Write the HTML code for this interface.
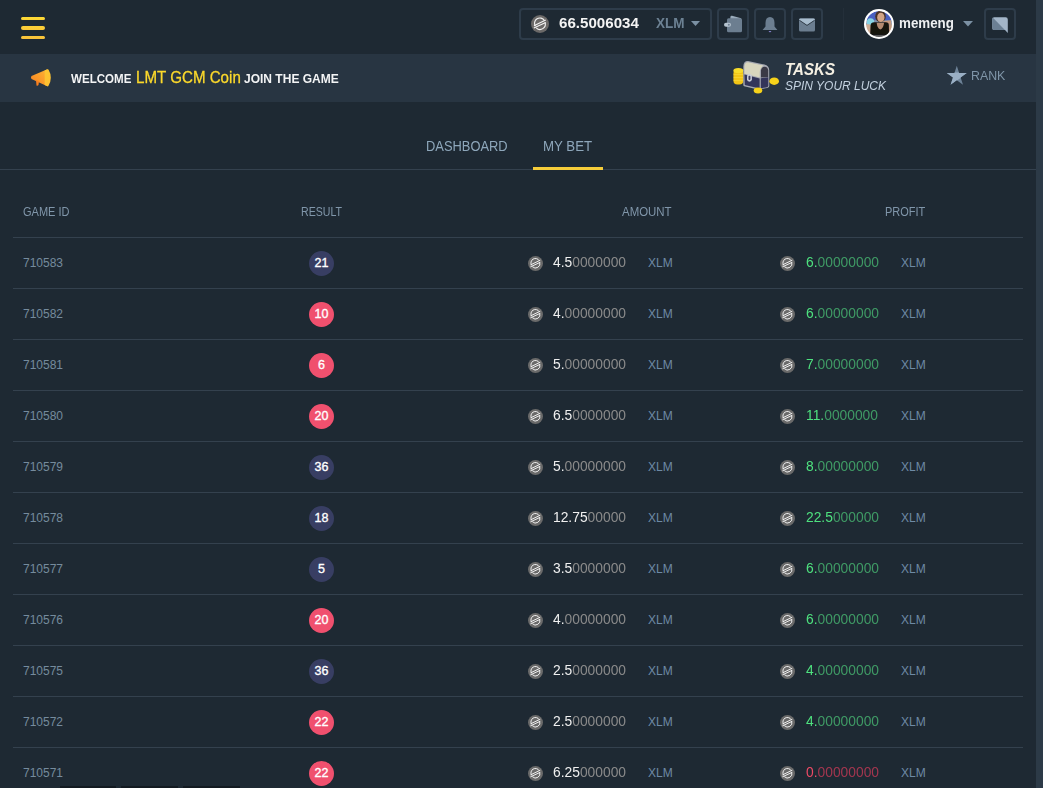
<!DOCTYPE html>
<html><head><meta charset="utf-8">
<style>
*{box-sizing:border-box;margin:0;padding:0}
html,body{width:1043px;height:788px;overflow:hidden;background:#1e2933;font-family:"Liberation Sans",sans-serif}
.abs{position:absolute}
.sx{white-space:nowrap;transform-origin:0 0}
svg{display:block}
#hdr{position:absolute;left:0;top:0;width:1036px;height:54px;background:#1e2933}
#strip{position:absolute;left:1036px;top:0;width:7px;height:788px;background:#2c3a47}
.burger{position:absolute;left:21px;width:24px;height:3.6px;border-radius:2px;background:#fcd23b}
.box{position:absolute;top:8px;height:31.5px;border:2px solid #2e3c4a;border-radius:4px}
#banner{position:absolute;left:0;top:54px;width:1036px;height:48px;background:#283542}
.tabline{position:absolute;left:0;top:169px;width:1036px;height:1px;background:#34414e}
.tab{position:absolute;top:138px;font-size:14px;color:#8ea7bb}
.th{position:absolute;top:205px;font-size:12px;color:#8096aa}
.row{position:absolute;left:13px;width:1010px;height:51px;border-top:1px solid #34414e}
.gid{position:absolute;left:10px;top:18px;font-size:12px;color:#758b9d}
.res{position:absolute;left:296px;top:13px;width:25px;height:25px;border-radius:50%;color:#fff;font-size:12.5px;-webkit-text-stroke:0.35px #fff;text-align:center;line-height:25px}
.res.red{background:#f0506e}
.res.blk{background:#383e63}
.amt,.prf{position:absolute;top:0;height:50px}
.amt{left:514px}
.prf{left:766px}
.xi{position:absolute;left:1px;top:18px;width:15px;height:15px}
.v{position:absolute;left:26px;top:16px;font-size:14px;white-space:nowrap;transform:scaleX(0.987);transform-origin:0 0}
.v b{font-weight:normal;color:#f0f0f0}
.v i{font-style:normal;color:#8a8a8a}
.prf.win .v b{color:#4ee27f}
.prf.win .v i{color:#3f9a65}
.prf.lose .v b{color:#ee4a66}
.prf.lose .v i{color:#a3364f}
.cur{position:absolute;left:121px;top:18px;font-size:12px;color:#6e8aa5}
.prf .v{left:27px}
.prf .cur{left:122px}
</style></head><body>
<div id="hdr">
  <div class="burger" style="top:16.9px;height:3.4px;background:linear-gradient(180deg,#fedb35,#fcd337)"></div>
  <div class="burger" style="top:26.2px;height:3.5px;background:linear-gradient(180deg,#fcd037,#fbc939)"></div>
  <div class="burger" style="top:35.8px;height:3.5px;background:linear-gradient(180deg,#fac73a,#f9c13a)"></div>
  <div class="box" style="left:519px;width:193px"></div>
  <svg class="abs" style="left:531px;top:15px" width="18" height="18" viewBox="0 0 15 15"><circle cx="7.5" cy="7.5" r="7.5" fill="#6b6968"/><g fill="none" stroke="#f4f4f4" stroke-width="0.95"><path d="M3.6 9.3 A4.4 4.4 0 0 1 11.2 4.6"/><path d="M11.7 6.2 A4.4 4.4 0 0 1 4.4 10.7"/><path d="M2.5 8.9 L12.3 4.2"/><path d="M2.4 10.9 L12.2 6.3"/></g></svg>
  <div class="abs sx" id="bal" style="left:559px;top:13.5px;font-size:15.5px;font-weight:bold;color:#f4f4f4;transform:scaleX(0.975)">66.5006034</div>
  <div class="abs sx" id="xlmh" style="left:656px;top:15px;font-size:14px;font-weight:bold;color:#6c8193;transform:scaleX(0.966)">XLM</div>
  <svg class="abs" style="left:691px;top:21px" width="9" height="5" viewBox="0 0 9 5"><path d="M0 0H9L4.5 5Z" fill="#7b90a3"/></svg>
  <div class="box" style="left:717px;width:32px"></div>
  <svg class="abs" style="left:722px;top:13px" width="24" height="22" viewBox="0 0 24 22"><path d="M8.4 4 Q8.6 2.4 10 2.7 L18.2 5 Q19.4 5.4 19.4 6.5 L8.4 6.5Z" fill="#9aabbb"/><rect x="5" y="5.3" width="15" height="14" rx="1.6" fill="#6c7e90"/><rect x="2" y="9.8" width="7" height="4" rx="2" fill="#b5c3cf"/><circle cx="6.8" cy="11.8" r="1" fill="#6c7e90"/></svg>
  <div class="box" style="left:754px;width:32px"></div>
  <svg class="abs" style="left:759px;top:13px" width="22" height="22" viewBox="0 0 22 22"><path d="M11 4 Q15.5 4 15.5 10 L15.5 13.5 L18.4 17 L3.6 17 L6.5 13.5 L6.5 10 Q6.5 4 11 4Z" fill="#6c7e90"/><path d="M9.5 18 H12.5 L11 19.6Z" fill="#8b86d6"/></svg>
  <div class="box" style="left:791px;width:32px"></div>
  <svg class="abs" style="left:796px;top:13px" width="22" height="22" viewBox="0 0 22 22"><rect x="3" y="5.6" width="16" height="13" rx="1.5" fill="#6c7e90"/><path d="M3 7 Q3 5.6 4.5 5.6 L17.5 5.6 Q19 5.6 19 7 L11 12.2Z" fill="#a8bccd"/><path d="M3.3 7.2 L11 12.4 L18.7 7.2" fill="none" stroke="#26313c" stroke-width="0.9"/></svg>
  <div class="abs" style="left:843px;top:8px;width:1px;height:32px;background:#242f3a"></div>
  <div class="abs" style="left:864px;top:9px;width:30px;height:30px;border-radius:50%;background:#fff;padding:1.8px">
    <svg width="26.4" height="26.4" viewBox="0 0 26 26" style="border-radius:50%"><defs><clipPath id="avc"><circle cx="13" cy="13" r="13"/></clipPath><filter id="avb"><feGaussianBlur stdDeviation="0.45"/></filter></defs><g clip-path="url(#avc)"><g filter="url(#avb)">
    <rect x="-2" y="-2" width="30" height="30" fill="#8c9bb5"/>
    <rect x="-2" y="-2" width="30" height="12" fill="#4a5fc0"/>
    <rect x="-2" y="9" width="30" height="2" fill="#7f8fa8"/>
    <ellipse cx="4.5" cy="11" rx="3.6" ry="3.8" fill="#86d4e4"/>
    <ellipse cx="14.3" cy="5.3" rx="5.2" ry="5.8" fill="#4a3327"/>
    <ellipse cx="14.6" cy="6.3" rx="3.6" ry="4.6" fill="#d2a486"/>
    <path d="M17 10 L24.5 9 L25 13 L18 13Z" fill="#c79a7e"/>
    <rect x="-1" y="13" width="6" height="10" rx="2" fill="#cfae96"/>
    <rect x="21" y="13" width="6" height="9" rx="2" fill="#bf9a80"/>
    <path d="M4 26 L4.5 14 Q5 11.2 8 11.2 L19.5 11.2 Q22.5 11.2 22.5 14 L22.8 26Z" fill="#141211"/>
    <path d="M10.5 11.5 L17.8 11.5 Q17.2 17.5 14.1 18.2 Q11 17.5 10.5 11.5Z" fill="#b38a70"/>
    <rect x="6" y="23.6" width="14" height="4" fill="#5a5a5a"/>
    </g></g></svg>
  </div>
  <div class="abs sx" id="memeng" style="left:899px;top:15px;font-size:14px;font-weight:bold;color:#eef0f2;transform:scaleX(0.954)">memeng</div>
  <svg class="abs" style="left:963px;top:21px" width="10" height="6" viewBox="0 0 10 6"><path d="M0 0H10L5 5.5Z" fill="#7b90a3"/></svg>
  <div class="box" style="left:984px;width:32px"></div>
  <svg class="abs" style="left:992px;top:17px" width="16" height="16" viewBox="0 0 16 16"><path d="M2.3 0.3 H13.6 Q15.8 0.3 15.8 2.5 V15.9 L13 13.1 H2.3 Q0.2 13.1 0.2 11 V2.5 Q0.2 0.3 2.3 0.3Z" fill="#a3b5c8"/><path d="M0.2 2.5 Q0.2 0.6 1.2 0.9 L12.9 13.1 H2.3 Q0.2 13.1 0.2 11Z" fill="#6c8094"/></svg>
</div>
<div id="banner">
  <svg class="abs" style="left:30px;top:14px" width="22" height="20" viewBox="0 0 22 20"><defs><linearGradient id="mg" x1="0" y1="1" x2="1" y2="0"><stop offset="0" stop-color="#f7801f"/><stop offset="1" stop-color="#fcb535"/></linearGradient><linearGradient id="mm" x1="0" y1="0" x2="0" y2="1"><stop offset="0" stop-color="#fdc532"/><stop offset="1" stop-color="#fdc030"/></linearGradient></defs><path d="M1.5 8 L17.4 1.3 L17.4 18.3 L1.5 11 Q0.4 9.5 1.5 8Z" fill="url(#mg)"/><path d="M14.7 2.44 L17.4 1.3 Q18 0.8 18.6 1.8 Q20.8 5.5 20.8 9.8 Q20.8 14 18.6 17.6 Q18 18.8 17.4 18.3 L14.7 17.06Z" fill="url(#mm)"/><path d="M6 12 L9 13.3 L8.5 17 Q7.5 18.2 6.5 17.4Z" fill="#f8801f"/></svg>
  <div class="abs sx" id="wel" style="left:71px;top:17px;font-size:13px;font-weight:bold;color:#f3f4f5;transform:scaleX(0.89)">WELCOME</div>
  <div class="abs sx" id="lmt" style="left:136px;top:14px;font-size:17px;color:#fcd92b;-webkit-text-stroke:0.3px #fcd92b;transform:scaleX(0.89)">LMT GCM Coin</div>
  <div class="abs sx" id="join" style="left:243.5px;top:17px;font-size:13px;font-weight:bold;color:#f3f4f5;transform:scaleX(0.924)">JOIN THE GAME</div>
  <svg class="abs" style="left:733px;top:6px" width="47" height="34" viewBox="0 0 47 34">
    <rect x="0.4" y="9.5" width="10" height="15" rx="4" fill="#f2c515"/>
    <ellipse cx="5.4" cy="10.6" rx="5" ry="2.6" fill="#f8dc2a"/>
    <path d="M0.6 14.5 H10.2 M0.6 17.5 H10.2 M0.6 20.5 H10.2" stroke="#fbe04a" stroke-width="0.7" opacity="0.7"/>
    <path d="M10.3 6.5 Q10.6 1 15 1.1 L31.5 4.6 Q36 5.8 36.2 10 L36.3 26 Q36 28 32.6 28.3 L25 29.6 L11.1 26.2 Q10.3 26 10.3 24.5Z" fill="#a6a9b2"/>
    <path d="M11.4 6.5 Q11.8 2.2 15 2.3 L30.6 5.5 Q27 8 26.8 12 L26.8 17.5 L11.4 13.7Z" fill="#d8d6be"/>
    <path d="M11.4 14.6 L26.6 18.4 L26.6 28.4 L11.8 25Z" fill="#33355a"/>
    <path d="M28 10 Q28.5 7 31.6 6.8 Q35 7 35.2 10.5 L35.2 17 L28 17.5Z" fill="#3a3a46"/>
    <path d="M27.8 18.3 L35.3 17.2 L35.3 26 Q35 27.2 33 27.5 L27.8 28.3Z" fill="#33355a"/>
    <rect x="14" y="14" width="4.9" height="7.8" rx="2.45" fill="#c9cdd8"/>
    <rect x="15.5" y="15.8" width="1.9" height="4.2" rx="0.95" fill="#3a3d62"/>
    <ellipse cx="41.2" cy="21.2" rx="4.8" ry="3.7" fill="#f6d21a"/>
    <ellipse cx="25" cy="30.6" rx="4.3" ry="3" fill="#f6d21a"/>
  </svg>
  <div class="abs sx" id="tasks" style="left:785px;top:7px;font-size:16px;font-weight:bold;font-style:italic;color:#f4efe2;transform:scaleX(0.942)">TASKS</div>
  <div class="abs sx" id="spin" style="left:785px;top:24px;font-size:13px;font-style:italic;color:#c3d1df;transform:scaleX(0.922)">SPIN YOUR LUCK</div>
  <svg class="abs" style="left:946px;top:11px" width="22" height="21" viewBox="0 0 22 21"><defs><clipPath id="stc"><path d="M10.8 0.7 L13.17 8 L20.84 8 L14.63 12.5 L17 19.8 L10.8 15.3 L4.6 19.8 L6.97 12.5 L0.76 8 L8.43 8Z"/></clipPath></defs><path d="M10.8 0.7 L13.17 8 L20.84 8 L14.63 12.5 L17 19.8 L10.8 15.3 L4.6 19.8 L6.97 12.5 L0.76 8 L8.43 8Z" fill="#6e8398"/><path d="M0 7.5 L22 7.5 L4.2 20.5Z" fill="#9aafc4" clip-path="url(#stc)"/></svg>
  <div class="abs sx" id="rank" style="left:971px;top:14px;font-size:13px;color:#7f95a8;transform:scaleX(0.951)">RANK</div>
</div>
<div class="tab sx" id="dash" style="left:426px;transform:scaleX(0.921)">DASHBOARD</div>
<div class="tab sx" id="mybet" style="left:543px;transform:scaleX(0.947)">MY BET</div>
<div class="tabline"></div>
<div class="abs" style="left:533px;top:167px;width:70px;height:3px;background:#f6cd3a"></div>
<div class="th sx" id="thg" style="left:22.5px;transform:scaleX(0.918)">GAME ID</div>
<div class="th sx" id="thr" style="left:300.5px;transform:scaleX(0.883)">RESULT</div>
<div class="th sx" id="tha" style="left:622px;transform:scaleX(0.954)">AMOUNT</div>
<div class="th sx" id="thp" style="left:884.5px;transform:scaleX(0.916)">PROFIT</div>
<div class="row" style="top:237px">
<div class="gid">710583</div>
<div class="res blk">21</div>
<div class="amt"><svg class="xi" viewBox="0 0 15 15"><circle cx="7.5" cy="7.5" r="7.5" fill="#6a6a6a"/><g fill="none" stroke="#f4f4f4" stroke-width="0.95"><path d="M3.6 9.3 A4.4 4.4 0 0 1 11.2 4.6"/><path d="M11.7 6.2 A4.4 4.4 0 0 1 4.4 10.7"/><path d="M2.5 8.9 L12.3 4.2"/><path d="M2.4 10.9 L12.2 6.3"/></g></svg><span class="v"><b>4.5</b><i>0000000</i></span><span class="cur">XLM</span></div>
<div class="prf win"><svg class="xi" viewBox="0 0 15 15"><circle cx="7.5" cy="7.5" r="7.5" fill="#6a6a6a"/><g fill="none" stroke="#f4f4f4" stroke-width="0.95"><path d="M3.6 9.3 A4.4 4.4 0 0 1 11.2 4.6"/><path d="M11.7 6.2 A4.4 4.4 0 0 1 4.4 10.7"/><path d="M2.5 8.9 L12.3 4.2"/><path d="M2.4 10.9 L12.2 6.3"/></g></svg><span class="v"><b>6.</b><i>00000000</i></span><span class="cur">XLM</span></div>
</div>
<div class="row" style="top:288px">
<div class="gid">710582</div>
<div class="res red">10</div>
<div class="amt"><svg class="xi" viewBox="0 0 15 15"><circle cx="7.5" cy="7.5" r="7.5" fill="#6a6a6a"/><g fill="none" stroke="#f4f4f4" stroke-width="0.95"><path d="M3.6 9.3 A4.4 4.4 0 0 1 11.2 4.6"/><path d="M11.7 6.2 A4.4 4.4 0 0 1 4.4 10.7"/><path d="M2.5 8.9 L12.3 4.2"/><path d="M2.4 10.9 L12.2 6.3"/></g></svg><span class="v"><b>4.</b><i>00000000</i></span><span class="cur">XLM</span></div>
<div class="prf win"><svg class="xi" viewBox="0 0 15 15"><circle cx="7.5" cy="7.5" r="7.5" fill="#6a6a6a"/><g fill="none" stroke="#f4f4f4" stroke-width="0.95"><path d="M3.6 9.3 A4.4 4.4 0 0 1 11.2 4.6"/><path d="M11.7 6.2 A4.4 4.4 0 0 1 4.4 10.7"/><path d="M2.5 8.9 L12.3 4.2"/><path d="M2.4 10.9 L12.2 6.3"/></g></svg><span class="v"><b>6.</b><i>00000000</i></span><span class="cur">XLM</span></div>
</div>
<div class="row" style="top:339px">
<div class="gid">710581</div>
<div class="res red">6</div>
<div class="amt"><svg class="xi" viewBox="0 0 15 15"><circle cx="7.5" cy="7.5" r="7.5" fill="#6a6a6a"/><g fill="none" stroke="#f4f4f4" stroke-width="0.95"><path d="M3.6 9.3 A4.4 4.4 0 0 1 11.2 4.6"/><path d="M11.7 6.2 A4.4 4.4 0 0 1 4.4 10.7"/><path d="M2.5 8.9 L12.3 4.2"/><path d="M2.4 10.9 L12.2 6.3"/></g></svg><span class="v"><b>5.</b><i>00000000</i></span><span class="cur">XLM</span></div>
<div class="prf win"><svg class="xi" viewBox="0 0 15 15"><circle cx="7.5" cy="7.5" r="7.5" fill="#6a6a6a"/><g fill="none" stroke="#f4f4f4" stroke-width="0.95"><path d="M3.6 9.3 A4.4 4.4 0 0 1 11.2 4.6"/><path d="M11.7 6.2 A4.4 4.4 0 0 1 4.4 10.7"/><path d="M2.5 8.9 L12.3 4.2"/><path d="M2.4 10.9 L12.2 6.3"/></g></svg><span class="v"><b>7.</b><i>00000000</i></span><span class="cur">XLM</span></div>
</div>
<div class="row" style="top:390px">
<div class="gid">710580</div>
<div class="res red">20</div>
<div class="amt"><svg class="xi" viewBox="0 0 15 15"><circle cx="7.5" cy="7.5" r="7.5" fill="#6a6a6a"/><g fill="none" stroke="#f4f4f4" stroke-width="0.95"><path d="M3.6 9.3 A4.4 4.4 0 0 1 11.2 4.6"/><path d="M11.7 6.2 A4.4 4.4 0 0 1 4.4 10.7"/><path d="M2.5 8.9 L12.3 4.2"/><path d="M2.4 10.9 L12.2 6.3"/></g></svg><span class="v"><b>6.5</b><i>0000000</i></span><span class="cur">XLM</span></div>
<div class="prf win"><svg class="xi" viewBox="0 0 15 15"><circle cx="7.5" cy="7.5" r="7.5" fill="#6a6a6a"/><g fill="none" stroke="#f4f4f4" stroke-width="0.95"><path d="M3.6 9.3 A4.4 4.4 0 0 1 11.2 4.6"/><path d="M11.7 6.2 A4.4 4.4 0 0 1 4.4 10.7"/><path d="M2.5 8.9 L12.3 4.2"/><path d="M2.4 10.9 L12.2 6.3"/></g></svg><span class="v"><b>11.</b><i>0000000</i></span><span class="cur">XLM</span></div>
</div>
<div class="row" style="top:441px">
<div class="gid">710579</div>
<div class="res blk">36</div>
<div class="amt"><svg class="xi" viewBox="0 0 15 15"><circle cx="7.5" cy="7.5" r="7.5" fill="#6a6a6a"/><g fill="none" stroke="#f4f4f4" stroke-width="0.95"><path d="M3.6 9.3 A4.4 4.4 0 0 1 11.2 4.6"/><path d="M11.7 6.2 A4.4 4.4 0 0 1 4.4 10.7"/><path d="M2.5 8.9 L12.3 4.2"/><path d="M2.4 10.9 L12.2 6.3"/></g></svg><span class="v"><b>5.</b><i>00000000</i></span><span class="cur">XLM</span></div>
<div class="prf win"><svg class="xi" viewBox="0 0 15 15"><circle cx="7.5" cy="7.5" r="7.5" fill="#6a6a6a"/><g fill="none" stroke="#f4f4f4" stroke-width="0.95"><path d="M3.6 9.3 A4.4 4.4 0 0 1 11.2 4.6"/><path d="M11.7 6.2 A4.4 4.4 0 0 1 4.4 10.7"/><path d="M2.5 8.9 L12.3 4.2"/><path d="M2.4 10.9 L12.2 6.3"/></g></svg><span class="v"><b>8.</b><i>00000000</i></span><span class="cur">XLM</span></div>
</div>
<div class="row" style="top:492px">
<div class="gid">710578</div>
<div class="res blk">18</div>
<div class="amt"><svg class="xi" viewBox="0 0 15 15"><circle cx="7.5" cy="7.5" r="7.5" fill="#6a6a6a"/><g fill="none" stroke="#f4f4f4" stroke-width="0.95"><path d="M3.6 9.3 A4.4 4.4 0 0 1 11.2 4.6"/><path d="M11.7 6.2 A4.4 4.4 0 0 1 4.4 10.7"/><path d="M2.5 8.9 L12.3 4.2"/><path d="M2.4 10.9 L12.2 6.3"/></g></svg><span class="v"><b>12.75</b><i>00000</i></span><span class="cur">XLM</span></div>
<div class="prf win"><svg class="xi" viewBox="0 0 15 15"><circle cx="7.5" cy="7.5" r="7.5" fill="#6a6a6a"/><g fill="none" stroke="#f4f4f4" stroke-width="0.95"><path d="M3.6 9.3 A4.4 4.4 0 0 1 11.2 4.6"/><path d="M11.7 6.2 A4.4 4.4 0 0 1 4.4 10.7"/><path d="M2.5 8.9 L12.3 4.2"/><path d="M2.4 10.9 L12.2 6.3"/></g></svg><span class="v"><b>22.5</b><i>000000</i></span><span class="cur">XLM</span></div>
</div>
<div class="row" style="top:543px">
<div class="gid">710577</div>
<div class="res blk">5</div>
<div class="amt"><svg class="xi" viewBox="0 0 15 15"><circle cx="7.5" cy="7.5" r="7.5" fill="#6a6a6a"/><g fill="none" stroke="#f4f4f4" stroke-width="0.95"><path d="M3.6 9.3 A4.4 4.4 0 0 1 11.2 4.6"/><path d="M11.7 6.2 A4.4 4.4 0 0 1 4.4 10.7"/><path d="M2.5 8.9 L12.3 4.2"/><path d="M2.4 10.9 L12.2 6.3"/></g></svg><span class="v"><b>3.5</b><i>0000000</i></span><span class="cur">XLM</span></div>
<div class="prf win"><svg class="xi" viewBox="0 0 15 15"><circle cx="7.5" cy="7.5" r="7.5" fill="#6a6a6a"/><g fill="none" stroke="#f4f4f4" stroke-width="0.95"><path d="M3.6 9.3 A4.4 4.4 0 0 1 11.2 4.6"/><path d="M11.7 6.2 A4.4 4.4 0 0 1 4.4 10.7"/><path d="M2.5 8.9 L12.3 4.2"/><path d="M2.4 10.9 L12.2 6.3"/></g></svg><span class="v"><b>6.</b><i>00000000</i></span><span class="cur">XLM</span></div>
</div>
<div class="row" style="top:594px">
<div class="gid">710576</div>
<div class="res red">20</div>
<div class="amt"><svg class="xi" viewBox="0 0 15 15"><circle cx="7.5" cy="7.5" r="7.5" fill="#6a6a6a"/><g fill="none" stroke="#f4f4f4" stroke-width="0.95"><path d="M3.6 9.3 A4.4 4.4 0 0 1 11.2 4.6"/><path d="M11.7 6.2 A4.4 4.4 0 0 1 4.4 10.7"/><path d="M2.5 8.9 L12.3 4.2"/><path d="M2.4 10.9 L12.2 6.3"/></g></svg><span class="v"><b>4.</b><i>00000000</i></span><span class="cur">XLM</span></div>
<div class="prf win"><svg class="xi" viewBox="0 0 15 15"><circle cx="7.5" cy="7.5" r="7.5" fill="#6a6a6a"/><g fill="none" stroke="#f4f4f4" stroke-width="0.95"><path d="M3.6 9.3 A4.4 4.4 0 0 1 11.2 4.6"/><path d="M11.7 6.2 A4.4 4.4 0 0 1 4.4 10.7"/><path d="M2.5 8.9 L12.3 4.2"/><path d="M2.4 10.9 L12.2 6.3"/></g></svg><span class="v"><b>6.</b><i>00000000</i></span><span class="cur">XLM</span></div>
</div>
<div class="row" style="top:645px">
<div class="gid">710575</div>
<div class="res blk">36</div>
<div class="amt"><svg class="xi" viewBox="0 0 15 15"><circle cx="7.5" cy="7.5" r="7.5" fill="#6a6a6a"/><g fill="none" stroke="#f4f4f4" stroke-width="0.95"><path d="M3.6 9.3 A4.4 4.4 0 0 1 11.2 4.6"/><path d="M11.7 6.2 A4.4 4.4 0 0 1 4.4 10.7"/><path d="M2.5 8.9 L12.3 4.2"/><path d="M2.4 10.9 L12.2 6.3"/></g></svg><span class="v"><b>2.5</b><i>0000000</i></span><span class="cur">XLM</span></div>
<div class="prf win"><svg class="xi" viewBox="0 0 15 15"><circle cx="7.5" cy="7.5" r="7.5" fill="#6a6a6a"/><g fill="none" stroke="#f4f4f4" stroke-width="0.95"><path d="M3.6 9.3 A4.4 4.4 0 0 1 11.2 4.6"/><path d="M11.7 6.2 A4.4 4.4 0 0 1 4.4 10.7"/><path d="M2.5 8.9 L12.3 4.2"/><path d="M2.4 10.9 L12.2 6.3"/></g></svg><span class="v"><b>4.</b><i>00000000</i></span><span class="cur">XLM</span></div>
</div>
<div class="row" style="top:696px">
<div class="gid">710572</div>
<div class="res red">22</div>
<div class="amt"><svg class="xi" viewBox="0 0 15 15"><circle cx="7.5" cy="7.5" r="7.5" fill="#6a6a6a"/><g fill="none" stroke="#f4f4f4" stroke-width="0.95"><path d="M3.6 9.3 A4.4 4.4 0 0 1 11.2 4.6"/><path d="M11.7 6.2 A4.4 4.4 0 0 1 4.4 10.7"/><path d="M2.5 8.9 L12.3 4.2"/><path d="M2.4 10.9 L12.2 6.3"/></g></svg><span class="v"><b>2.5</b><i>0000000</i></span><span class="cur">XLM</span></div>
<div class="prf win"><svg class="xi" viewBox="0 0 15 15"><circle cx="7.5" cy="7.5" r="7.5" fill="#6a6a6a"/><g fill="none" stroke="#f4f4f4" stroke-width="0.95"><path d="M3.6 9.3 A4.4 4.4 0 0 1 11.2 4.6"/><path d="M11.7 6.2 A4.4 4.4 0 0 1 4.4 10.7"/><path d="M2.5 8.9 L12.3 4.2"/><path d="M2.4 10.9 L12.2 6.3"/></g></svg><span class="v"><b>4.</b><i>00000000</i></span><span class="cur">XLM</span></div>
</div>
<div class="row" style="top:747px">
<div class="gid">710571</div>
<div class="res red">22</div>
<div class="amt"><svg class="xi" viewBox="0 0 15 15"><circle cx="7.5" cy="7.5" r="7.5" fill="#6a6a6a"/><g fill="none" stroke="#f4f4f4" stroke-width="0.95"><path d="M3.6 9.3 A4.4 4.4 0 0 1 11.2 4.6"/><path d="M11.7 6.2 A4.4 4.4 0 0 1 4.4 10.7"/><path d="M2.5 8.9 L12.3 4.2"/><path d="M2.4 10.9 L12.2 6.3"/></g></svg><span class="v"><b>6.25</b><i>000000</i></span><span class="cur">XLM</span></div>
<div class="prf lose"><svg class="xi" viewBox="0 0 15 15"><circle cx="7.5" cy="7.5" r="7.5" fill="#6a6a6a"/><g fill="none" stroke="#f4f4f4" stroke-width="0.95"><path d="M3.6 9.3 A4.4 4.4 0 0 1 11.2 4.6"/><path d="M11.7 6.2 A4.4 4.4 0 0 1 4.4 10.7"/><path d="M2.5 8.9 L12.3 4.2"/><path d="M2.4 10.9 L12.2 6.3"/></g></svg><span class="v"><b>0.</b><i>00000000</i></span><span class="cur">XLM</span></div>
</div>
<div id="strip"></div>
<div class="abs" style="left:60px;top:786px;width:56px;height:2px;background:#131a21"></div>
<div class="abs" style="left:121px;top:786px;width:57px;height:2px;background:#131a21"></div>
<div class="abs" style="left:183px;top:786px;width:57px;height:2px;background:#131a21"></div>
</body></html>
